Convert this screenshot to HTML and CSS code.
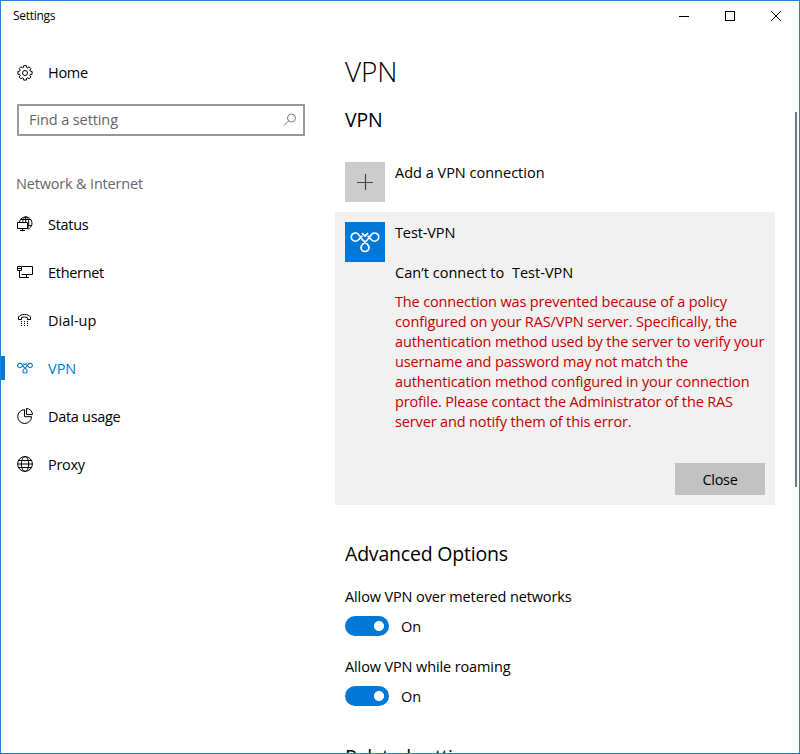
FILE: index.html
```html
<!DOCTYPE html>
<html lang="en">
<head>
<meta charset="utf-8">
<title>Settings</title>
<link rel="stylesheet" href="styles.css">
</head>
<body>
<svg class="defs" width="0" height="0" aria-hidden="true">
  <symbol id="vpn" viewBox="0 0 30 22">
    <path d="M12 2.200L15 5l3-2.800M8.300 3.200a4.100 4.100 0 1 0 0 5.800L12.300 4.800M21.700 3.200a4.100 4.100 0 1 1 0 5.800L17.700 4.800M8.300 3.200L13 9.300C15 11.500 19 13.500 19 16.500a4 4 0 0 1-8 0C11 13.500 15 11.500 17 9.300L21.700 3.200"/>
  </symbol>
</svg>
<div class="window">
  <header class="titlebar">
    <span class="caption">Settings</span>
    <div class="controls">
      <svg width="46" height="30"><path d="M18 15.500h10"/></svg>
      <svg width="46" height="30"><rect x="18.500" y="10.500" width="9" height="9"/></svg>
      <svg width="46" height="30"><path d="M18 10l10 10M28 10L18 20"/></svg>
    </div>
  </header>
  <div class="body">
    <nav class="sidebar">
      <a class="item home">
        <svg width="16" height="16" viewBox="0 0 16 16"><path d="M6.700.6h2.600l.3 1.800 1 .4 1.500-1 1.800 1.800-1.100 1.500.4 1 1.900.4v2.700l-1.900.3-.4 1 1.100 1.500-1.800 1.800-1.500-1-1 .4-.3 1.900H6.700l-.3-1.900-1-.4-1.500 1L2.100 12l1.100-1.500-.4-1L.9 9.200V6.500l1.900-.4.4-1-1.100-1.500 1.800-1.800 1.500 1 1-.4z"/><circle cx="8" cy="8" r="2.500"/></svg>
        <span>Home</span>
      </a>
      <div class="search">
        <span>Find a setting</span>
        <svg width="14" height="14" viewBox="0 0 14 14"><circle cx="8.500" cy="5" r="4"/><path d="M5.600 7.900L.8 12.700"/></svg>
      </div>
      <h2 class="group">Network &amp; Internet</h2>
      <a class="item status">
        <svg width="16" height="16" viewBox="0 0 16 16"><path d="M2.500 6A6.300 6.300 0 1 1 11 13.100M5.700 7C5.700 3.500 7 .800 8.700.800s3 2.700 3 6.200-.5 4.500-.9 5.500M3.500 3.500h10.500M11 9.500h3.500M8.700.800V7"/><path d="M.500 6.500h10v6h-10zM5.500 12.500v2M3 14.500h5"/></svg>
        <span>Status</span>
      </a>
      <a class="item">
        <svg width="16" height="16" viewBox="0 0 16 16"><path d="M5 2.500h10.500v8H4.500M9.500 10.500v3M5 13.500h7M.500 2.500h4v4h-4zM.500 4.500h4M2.500 6.500v7h2.500"/></svg>
        <span>Ethernet</span>
      </a>
      <a class="item">
        <svg width="16" height="16" viewBox="0 0 16 16"><path d="M1.500 7.500V5C2.500 3.300 5 2.500 7.500 2.500S12.500 3.300 13.500 5v2.500h-3V5.700c-2-.9-4-.9-6 0v1.800z"/><path d="M4 9.500h1M7 9.500h1M10 9.500h1M4 11.500h1M7 11.500h1M10 11.500h1M4 13.500h1M7 13.500h1M10 13.500h1"/></svg>
        <span class="dialup">Dial-up</span>
      </a>
      <a class="item active">
        <svg width="16" height="16" viewBox="0 -4 30 30" class="vpn-small"><use href="#vpn" width="30" height="22"/></svg>
        <span>VPN</span>
      </a>
      <a class="item">
        <svg width="16" height="16" viewBox="0 0 16 16"><path d="M7.500 1.700a6.900 6.900 0 1 0 7 7h-7zM9.500.500v6h6A6.200 6.200 0 0 0 9.500.500z"/></svg>
        <span>Data usage</span>
      </a>
      <a class="item">
        <svg width="16" height="16" viewBox="0 0 16 16"><circle cx="8" cy="8" r="7.400"/><ellipse cx="8" cy="8" rx="3.700" ry="7.400"/><path d="M1.500 4.500h13M.500 8h15M1.500 11.500h13"/></svg>
        <span>Proxy</span>
      </a>
    </nav>
    <main class="content">
      <h1>VPN</h1>
      <h3>VPN</h3>
      <div class="row add">
        <div class="tile"><svg width="40" height="40"><path d="M12 20.500h16M20.500 12v16"/></svg></div>
        <span class="add-label">Add a VPN connection</span>
      </div>
      <section class="card">
        <div class="row">
          <div class="tile blue"><svg width="30" height="22" viewBox="0 0 30 22"><use href="#vpn" width="30" height="22"/></svg></div>
          <div class="details">
            <p class="name">Test-VPN</p>
            <p class="state">Can’t connect to &nbsp;Test-VPN</p>
            <p class="error">The connection was prevented because of a policy<br>configured on your RAS/VPN server. Specifically, the<br>authentication method used by the server to verify your<br>username and password may not match the<br>authentication method configured in your connection<br>profile. Please contact the Administrator of the RAS<br>server and notify them of this error.</p>
          </div>
        </div>
        <button class="close">Close</button>
      </section>
      <h3 class="advanced">Advanced Options</h3>
      <div class="option">
        <p>Allow VPN over metered networks</p>
        <div class="switch"><i class="toggle"></i><span>On</span></div>
      </div>
      <div class="option">
        <p>Allow VPN while roaming</p>
        <div class="switch"><i class="toggle"></i><span>On</span></div>
      </div>
      <h3 class="related">Related settings</h3>
    </main>
    <div class="scroll"></div>
  </div>
</div>
</body>
</html>
```
FILE: styles.css
```css
* { box-sizing: border-box; margin: 0; padding: 0; }
body {
  width: 800px; height: 754px; overflow: hidden; background: #fff; color: #000;
  font: 14.5px/20px "Open Sans", "Noto Sans", sans-serif; letter-spacing: -0.3px;
}
svg { display: block; fill: none; stroke: currentColor; stroke-width: 1; flex: none; }
.defs { position: absolute; }
span, p, h1, h2, h3 { white-space: nowrap; }
.window { width: 800px; height: 754px; border: 1px solid #2482d3; overflow: hidden; display: flex; flex-direction: column; }
.titlebar { height: 30px; display: flex; justify-content: space-between; flex: none; }
.caption { font-size: 12px; line-height: 30px; padding-left: 12px; }
.controls { display: flex; }
.body { display: flex; height: 722px; }
.sidebar { width: 334px; flex: none; padding-top: 18px; }
.item { display: flex; align-items: center; height: 48px; padding-left: 16px; gap: 15px; }
.item span { padding-top: 2px; }
.item .dialup { letter-spacing: 0; }
.item.home { height: 47px; }
.item.home span { padding-top: 1px; }
.search {
  width: 288px; height: 32px; margin: 8px 0 0 16px; border: 2px solid #999; padding: 0 6px 0 10px;
  display: flex; align-items: center; justify-content: space-between; color: #666; letter-spacing: -0.1px;
}
.search svg { stroke: #777; }
.group { margin: 38px 0 6px 15px; font-size: 14.5px; font-weight: 400; line-height: 20px; color: #666; letter-spacing: -0.18px; }
.active { color: #0078d7; padding-left: 16px; background: linear-gradient(#0078d7, #0078d7) 0 12px / 4px 24px no-repeat; }
.active span { letter-spacing: 0; }
.vpn-small { stroke-width: 2; }
.content { width: 440px; flex: none; letter-spacing: -0.12px; }
h1 { font-size: 28px; line-height: 36px; font-weight: 300; margin: 22px 0 0 10px; letter-spacing: -0.1px; }
h3 { font-size: 19.5px; line-height: 28px; font-weight: 400; margin: 17px 0 0 10px; letter-spacing: -0.2px; }
.row { display: flex; gap: 10px; }
.add { margin: 28px 0 0 10px; height: 40px; }
.add-label { padding-top: 1px; letter-spacing: 0; }
.tile { width: 40px; height: 40px; background: #ccc; flex: none; display: flex; align-items: center; justify-content: center; color: #444; }
.tile svg { stroke-width: 1.2; }
.blue { background: #0078d7; color: #fff; }
.blue svg { stroke-width: 1.7; }
.card { margin-top: 10px; height: 293px; background: #f1f1f1; padding: 10px; display: flex; flex-direction: column; justify-content: space-between; }
.details { padding-top: 1px; }
.state { margin-top: 20px; letter-spacing: 0.03px; }
.error { margin-top: 8px; color: #c50000; letter-spacing: -0.14px; }
.error::first-line { line-height: 21px; }
.close { align-self: flex-end; width: 90px; height: 32px; border: 0; background: #c2c2c2; font: inherit; letter-spacing: -0.3px; color: #000; padding-top: 2px; }
.advanced { margin-top: 35px; }
.option { margin: 19px 0 0 10px; }
.option + .option { margin-top: 21px; }
.switch { display: flex; gap: 12px; align-items: center; height: 20px; margin-top: 9px; }
.switch span { padding-top: 2px; }
.toggle { width: 44px; height: 20px; border-radius: 10px; background: radial-gradient(circle at 34px 10px, #fff 4.6px, #0078d7 5.4px); }
.related { margin-top: 37px; letter-spacing: -0.4px; }
.scroll { width: 2px; height: 375px; margin: 81px 0 0 20px; background: #767676; }
```
